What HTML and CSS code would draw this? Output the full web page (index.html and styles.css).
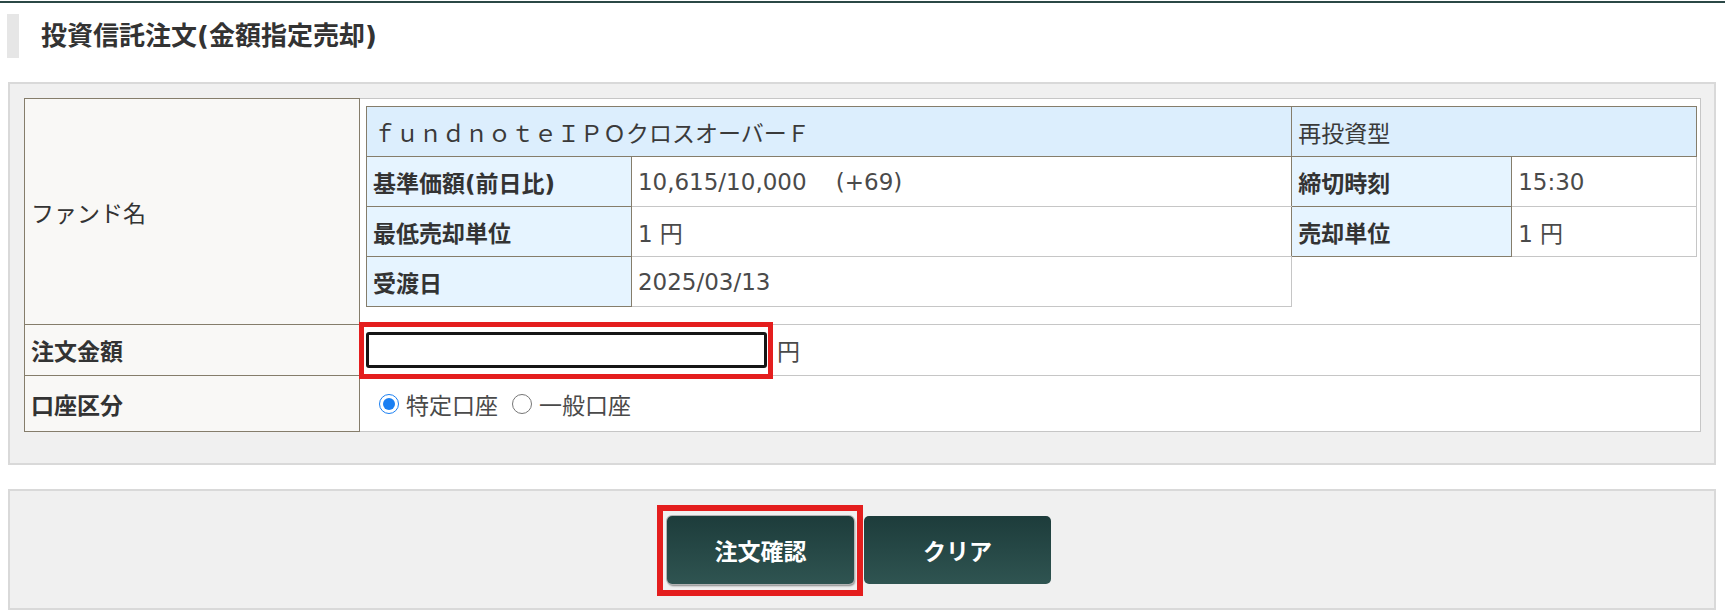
FILE: index.html
```html
<!DOCTYPE html>
<html lang="ja">
<head>
<meta charset="utf-8">
<title>投資信託注文(金額指定売却)</title>
<link rel="stylesheet" href="styles.css">
</head>
<body>
<div class="topline"></div>
<div class="heading"><h1>投資信託注文(金額指定売却)</h1></div>

<div class="panel">
  <table class="form-table">
    <tr class="row-fund">
      <th class="flabel normal">ファンド名</th>
      <td class="fcell fund">
        <table class="info">
          <colgroup>
            <col class="c1"><col class="c2"><col class="c3"><col class="c4">
          </colgroup>
          <tr>
            <td class="hd" colspan="2">ｆｕｎｄｎｏｔｅＩＰＯクロスオーバーＦ</td>
            <td class="hd" colspan="2">再投資型</td>
          </tr>
          <tr>
            <td class="lb">基準価額(前日比)</td>
            <td class="val mid">10,615/10,000&nbsp;&nbsp;&nbsp;&nbsp;(+69)</td>
            <td class="lb">締切時刻</td>
            <td class="val">15:30</td>
          </tr>
          <tr>
            <td class="lb">最低売却単位</td>
            <td class="val mid">1 円</td>
            <td class="lb">売却単位</td>
            <td class="val">1 円</td>
          </tr>
          <tr>
            <td class="lb">受渡日</td>
            <td class="val">2025/03/13</td>
          </tr>
        </table>
      </td>
    </tr>
    <tr class="row-amount">
      <th class="flabel">注文金額</th>
      <td class="fcell">
        <span class="amount-wrap"><input class="amount" type="text" aria-label="注文金額"><span class="redbox field-red"></span></span><span class="yen">円</span>
      </td>
    </tr>
    <tr class="row-account">
      <th class="flabel">口座区分</th>
      <td class="fcell">
        <div class="radios">
          <label class="radio"><input type="radio" name="acct" checked><span>特定口座</span></label>
          <label class="radio"><input type="radio" name="acct"><span>一般口座</span></label>
        </div>
      </td>
    </tr>
  </table>
</div>

<div class="btn-panel">
  <span class="btn-wrap"><button class="btn focus" type="button">注文確認</button><span class="redbox btn-red"></span></span>
  <button class="btn" type="button">クリア</button>
</div>
</body>
</html>
```
FILE: styles.css
```css
* { box-sizing: border-box; }

body {
  margin: 0;
  background: #fff;
  color: #333;
  font-family: "DejaVu Sans", "Noto Sans CJK JP", sans-serif;
  font-size: 23px;
}

.topline {
  height: 2px;
  margin-top: 1px;
  background: #2b4846;
}

.heading {
  margin: 11px 0 0 7px;
  height: 44px;
  border-left: 12px solid #e6e6e6;
  padding-left: 22px;
  display: flex;
  align-items: center;
}

.heading h1 {
  margin: 0;
  font-size: 26px;
  line-height: 1;
  font-weight: bold;
  color: #333;
}

.panel {
  margin: 24px 9px 0 8px;
  border: 2px solid #d9d9d9;
  background: #f0f0f0;
  padding: 14px 13px 31px 14px;
}

.form-table {
  width: 100%;
  border-collapse: collapse;
}

.flabel {
  width: 335px;
  background: #f9f8f6;
  border: 1px solid #857d6b;
  padding: 0 6px;
  text-align: left;
  font-weight: bold;
  color: #333;
}

.flabel.normal { font-weight: normal; }

.fcell {
  background: #fff;
  border: 1px solid #c6c6c6;
  padding: 0 6px;
  color: #4a4a4a;
}

.fcell.fund {
  padding: 7px 3px 17px 6px;
  vertical-align: top;
}

.row-fund { height: 225px; }
.row-amount { height: 51px; }
.row-account { height: 56px; }

.info {
  width: 1331px;
  border-collapse: collapse;
}

.info .c1 { width: 265px; }
.info .c2 { width: 661px; }
.info .c3 { width: 220px; }
.info .c4 { width: 185px; }

.info td {
  height: 50px;
  padding: 0 6px;
  white-space: nowrap;
}

.info .hd {
  background: #dceefd;
  border: 1px solid #857d6b;
  color: #3a3a3a;
}

.info .lb {
  background: #e6f4ff;
  border: 1px solid #857d6b;
  font-weight: bold;
  color: #333;
}

.info .val {
  background: #fff;
  border: 1px solid #c6c6c6;
  color: #4a4a4a;
}

.info .val.mid { border-right: none; }

.amount-wrap {
  position: relative;
  display: inline-block;
  vertical-align: middle;
}

.amount {
  display: block;
  width: 401px;
  height: 36px;
  margin: 0;
  padding: 0 4px;
  border: 3px solid #151515;
  border-radius: 3px;
  background: #fff;
  font-size: 20px;
}

.redbox {
  position: absolute;
  border: 5px solid #e41e1e;
  pointer-events: none;
}

.field-red {
  left: -7px;
  top: -10px;
  right: -6px;
  bottom: -11px;
}

.yen {
  margin-left: 10px;
  vertical-align: middle;
  color: #4a4a4a;
}

.radios {
  display: flex;
  align-items: center;
  gap: 14px;
  padding-left: 13px;
}

.radio {
  display: flex;
  align-items: center;
  color: #4a4a4a;
}

.radio input {
  width: 20px;
  height: 20px;
  margin: 0 7px 0 0;
  accent-color: #1a7ff2;
}

.btn-panel {
  margin: 24px 9px 0 8px;
  height: 121px;
  border: 2px solid #d9d9d9;
  background: #f0f0f0;
  display: flex;
  justify-content: center;
  align-items: center;
  gap: 10px;
  padding-right: 6px;
}

.btn-wrap {
  position: relative;
  display: inline-block;
}

.btn {
  display: block;
  width: 187px;
  height: 68px;
  border: none;
  border-radius: 5px;
  background: linear-gradient(#1d3c3b, #2f5451);
  color: #fff;
  font-family: inherit;
  font-size: 23px;
  font-weight: bold;
}

.btn.focus {
  box-shadow: 0 0 0 1px #b4b4b4, 1px 2px 2px rgba(0, 0, 0, 0.45);
}

.btn-red {
  left: -10px;
  top: -11px;
  right: -9px;
  bottom: -12px;
  border-width: 6px;
}
```
